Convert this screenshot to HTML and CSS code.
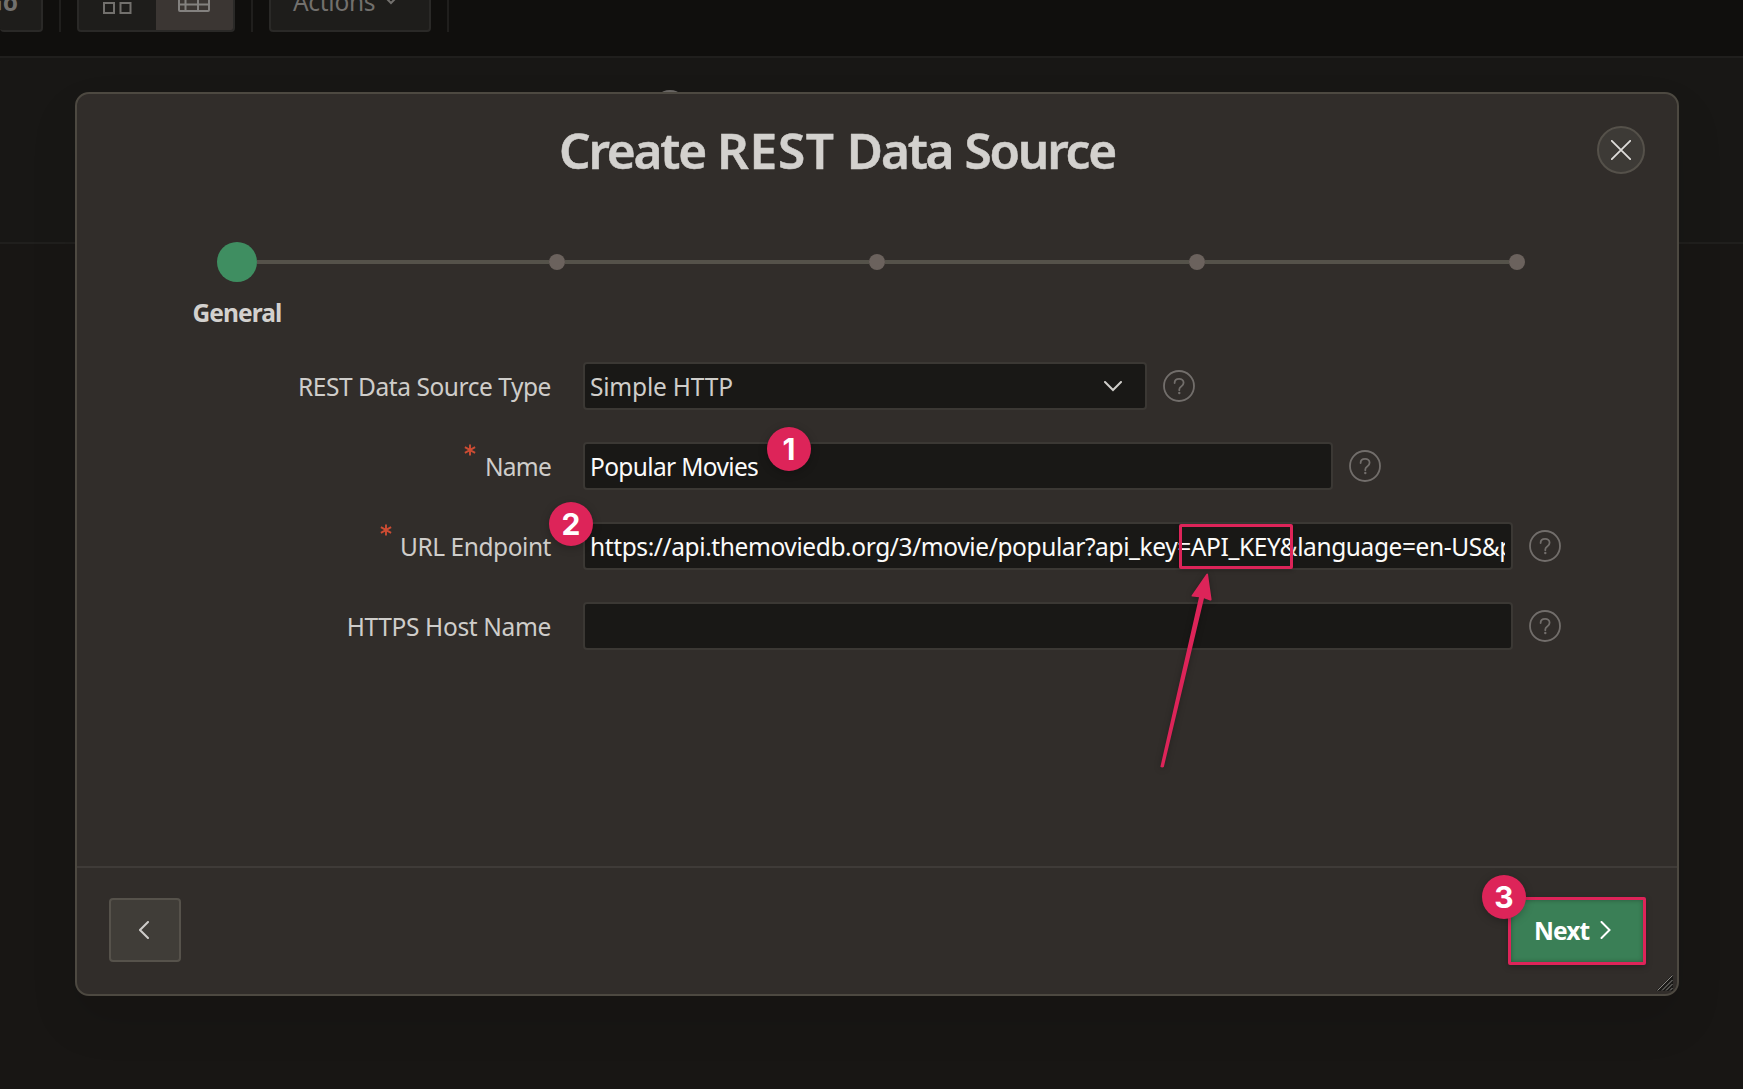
FILE: index.html
```html
<!DOCTYPE html>
<html lang="en">
<head>
<meta charset="utf-8">
<title>Create REST Data Source</title>
<link rel="stylesheet" href="styles.css">
</head>
<body>
<header class="toolbar">
  <div class="tool go">Go</div>
  <i class="sep"></i>
  <div class="tool views">
    <span class="view">
      <svg width="29" height="34" viewBox="0 0 29 34" fill="none" stroke="currentColor" stroke-width="2"><path d="M1 1h10v10H1zM17.500 1h10v10h-10zM1 23h10v10H1zM17.500 23h10v10h-10z"/></svg>
    </span>
    <span class="view active">
      <svg width="32" height="30" viewBox="0 0 32 30" fill="none" stroke="currentColor" stroke-width="2"><rect x="1" y="1" width="30" height="28" rx="1"/><path d="M1 22.500h30M1 15.500h30M7.500 8v21M20 8v21M1 8h30"/></svg>
    </span>
  </div>
  <i class="sep"></i>
  <div class="tool actions">Actions
    <svg width="14" height="9" viewBox="0 0 14 9" fill="none" stroke="currentColor" stroke-width="2"><path d="M1 1l6 6 6-6"/></svg>
  </div>
  <i class="sep"></i>
</header>
<section class="search-region"><i class="peek"></i></section>

<main class="dialog">
  <div class="dialog-head">
    <h1>Create <span class="caps">REST</span> Data Source</h1>
    <button class="close" aria-label="Close">
      <svg width="20" height="20" viewBox="0 0 20 20" fill="none" stroke="currentColor" stroke-width="1.800" stroke-linecap="round"><path d="M.8.8l18.400 18.400M19.200.8L.8 19.200"/></svg>
    </button>
  </div>
  <div class="steps">
    <i class="dot current"></i><i class="line"></i><i class="dot"></i><i class="line"></i><i class="dot"></i><i class="line"></i><i class="dot"></i><i class="line"></i><i class="dot"></i>
  </div>
  <div class="step-name">General</div>
  <form class="fields">
    <div class="row">
      <label class="l-type">REST Data Source Type</label>
      <div class="field select"><span class="value v-type">Simple HTTP</span>
        <svg width="18" height="11" viewBox="0 0 18 11" fill="none" stroke="currentColor" stroke-width="2" stroke-linecap="round"><path d="M1 1l8 8 8-8"/></svg>
      </div>
      <svg class="help" viewBox="0 0 32 32"><use href="#help"/></svg>
    </div>
    <div class="row">
      <label class="l-name"><svg class="req" viewBox="0 0 12 12"><use href="#star"/></svg>Name</label>
      <div class="field medium"><span class="value v-name">Popular Movies</span></div>
      <svg class="help" viewBox="0 0 32 32"><use href="#help"/></svg>
    </div>
    <div class="row">
      <label class="l-url"><svg class="req" viewBox="0 0 12 12"><use href="#star"/></svg>URL Endpoint</label>
      <div class="field wide"><span class="value v-url">https://api.themoviedb.org/3/movie/popular?api_key=API_KEY&amp;language=en-US&amp;page=1</span></div>
      <svg class="help" viewBox="0 0 32 32"><use href="#help"/></svg>
    </div>
    <div class="row">
      <label class="l-host">HTTPS Host Name</label>
      <div class="field wide"></div>
      <svg class="help" viewBox="0 0 32 32"><use href="#help"/></svg>
    </div>
  </form>
  <footer class="dialog-foot">
    <button class="prev" aria-label="Previous">
      <svg width="10" height="18" viewBox="0 0 10 18" fill="none" stroke="currentColor" stroke-width="2" stroke-linecap="round"><path d="M9 1L1 9l8 8"/></svg>
    </button>
    <button class="next">Next
      <svg width="11" height="18" viewBox="0 0 11 18" fill="none" stroke="currentColor" stroke-width="2" stroke-linecap="round"><path d="M1.500 1L9.500 9l-8 8"/></svg>
    </button>
  </footer>
  <svg class="grip" viewBox="0 0 17 17"><path d="M0 17L17 0v17z" fill="#1b1a18"/><path d="M1.500 16.500L16.500 1.500M6 16.500L16.500 6M10 16.500l6.500-6.500M14 16.500l2.500-2.500" stroke="#8a8783" stroke-width="1"/></svg>
</main>

<i class="mark"></i>
<svg class="arrow" viewBox="0 0 70 210"><path d="M10.400 202.700L49 33.200L42.200 32.600Q41.200 32.300 41.600 31.400L56.400 10Q57.400 9 58 10.200L61.600 35.600Q61.500 37 60 36.400L54 34.300L13.800 203Q12 204 10.400 202.700Z" fill="#dd2459"/></svg>
<b class="badge b1">1</b>
<b class="badge b2">2</b>
<b class="badge b3">3</b>

<svg width="0" height="0" class="defs">
  <symbol id="help" viewBox="0 0 32 32"><circle cx="16" cy="16" r="15" fill="none" stroke="currentColor" stroke-width="1.800"/><path d="M11.600 13c0-2.600 1.900-4.200 4.500-4.200s4.500 1.700 4.500 4c0 1.900-1.200 2.900-2.400 3.800-1.300.9-1.900 1.600-1.900 3v.6" fill="none" stroke="currentColor" stroke-width="1.800" stroke-linecap="round"/><circle cx="16.300" cy="23" r="1.200" fill="currentColor"/></symbol>
  <symbol id="star" viewBox="0 0 12 12"><path d="M6 .5v11M.9 3.100l10.200 5.800M11.100 3.100L.9 8.900" fill="none" stroke="currentColor" stroke-width="1.900"/></symbol>
</svg>
</body>
</html>
```
FILE: styles.css
```css
* { box-sizing: border-box; }
html, body { height: 100%; }
body {
  margin: 0;
  overflow: hidden;
  background: #181614;
  font: 400 24.5px/34px "Noto Sans", "Open Sans", sans-serif;
  color: #cfcdca;
}
svg { display: block; flex: none; }
button { font: inherit; color: inherit; padding: 0; }
.defs { position: absolute; }

/* page behind the dialog */
.toolbar {
  height: 58px;
  display: flex;
  align-items: flex-start;
  background: #100f0d;
  border-bottom: 2px solid #201f1d;
  color: #72706d;
}
.tool {
  height: 64px;
  margin-top: -32px;
  display: flex;
  align-items: center;
  background: #1e1d1b;
  border: 2px solid #2a2927;
  border-radius: 4px;
}
.go { width: 43px; justify-content: flex-end; padding: 4px 23px 0 0; font-weight: 700; border-left: 0; }
.sep { width: 2px; height: 32px; background: #201f1d; margin: 0 16px; }
.views { width: 158px; align-items: stretch; overflow: hidden; }
.view { flex: 1; display: flex; align-items: center; justify-content: center; padding: 0 1px 6px 0; }
.active { background: #3b3633; color: #83817f; }
.actions { width: 162px; padding: 3px 0 0 22px; gap: 9px; letter-spacing: -.3px; }
.actions svg { margin-bottom: 3px; }
.search-region { height: 186px; background: #181715; border-bottom: 2px solid #201f1d; position: relative; }
.peek { position: absolute; left: 653px; top: 32px; width: 34px; height: 34px; border: 2px solid #6b6865; border-radius: 50%; }

/* dialog */
.dialog {
  position: absolute;
  left: 75px;
  top: 92px;
  width: 1604px;
  height: 904px;
  display: flex;
  flex-direction: column;
  background: #312d2a;
  border: 2px solid #4d4941;
  border-radius: 14px;
  box-shadow: 0 24px 48px rgba(0, 0, 0, .1);
}
.dialog-head { display: flex; align-items: center; height: 112px; padding-right: 32px; }
h1 { flex: 1; margin: 0; text-align: center; font-size: 49.5px; line-height: 60px; font-weight: 600; letter-spacing: -2.2px; word-spacing: 1.500px; color: #d3d1ce; -webkit-text-stroke: .5px #d3d1ce; }
.caps { letter-spacing: .7px; }
.close {
  width: 48px; height: 48px; border-radius: 50%;
  display: flex; align-items: center; justify-content: center;
  background: #3d3a36; border: 2px solid #55514a; color: #dedcda;
}
.steps { display: flex; align-items: center; height: 40px; margin: 36px 152px 0 140px; }
.dot { width: 16px; height: 16px; border-radius: 50%; background: #6b625d; }
.current { width: 40px; height: 40px; background: #3f8e61; }
.line { flex: 1; height: 4px; background: #55524a; }
.current + .line { flex: 0 0 292px; }
.step-name { width: 320px; text-align: center; margin-top: 14px; font-weight: 700; letter-spacing: -.9px; color: #d3d1ce; }
.fields { margin-top: 32px; display: flex; flex-direction: column; gap: 32px; }
.row { display: flex; align-items: center; height: 48px; }
label { width: 474px; padding-top: 2px; margin-right: 32px; display: flex; justify-content: flex-end; white-space: nowrap; }
.l-type { letter-spacing: -.45px; }
.l-name { letter-spacing: -.75px; }
.l-url { letter-spacing: -.45px; }
.l-host { letter-spacing: -.35px; }
/* required marker sits above the label's first letter */
.req { width: 12px; height: 12px; margin: -6px 8.500px 0 0; color: #cd4c33; }
.field {
  height: 48px; display: flex; align-items: center; padding: 0 6px;
  background: #191816; border: 2px solid #3b3834; border-radius: 4px;
}
.select { width: 564px; justify-content: space-between; padding-right: 23px; }
.medium { width: 750px; color: #fcfbfa; }
.wide { width: 930px; color: #fcfbfa; }
.value { white-space: nowrap; overflow: hidden; margin-left: -1px; padding-top: 2px; }
.v-type { letter-spacing: -.2px; }
.v-name { letter-spacing: -.65px; }
.v-url { letter-spacing: -.4px; }
.help { width: 32px; height: 32px; margin-left: 15.500px; color: #726e6b; }
.dialog-foot {
  margin-top: auto; height: 128px; padding: 0 31px 0 32px;
  display: flex; align-items: center; justify-content: space-between;
  border-top: 2px solid #3f3b38;
}
.prev, .next { display: flex; align-items: center; }
.prev { width: 72px; height: 64px; margin-bottom: 2px; justify-content: center; background: #403d38; border: 2px solid #56524b; border-radius: 4px; padding-right: 2px; }
.next {
  width: 138px; height: 68px; padding-left: 23px; gap: 11px;
  background: #3a7f56; border: 3px solid #dd2459; border-radius: 2px;
  box-shadow: 0 2px 6px rgba(0, 0, 0, .25), inset 0 0 5px rgba(0, 0, 0, .3);
  color: #fff; font-weight: 700; letter-spacing: -.9px;
}
.next svg { margin-bottom: 2px; }
.grip { position: absolute; right: 4px; bottom: 3px; width: 17px; height: 17px; }

/* callouts */
.badge {
  position: absolute; width: 44px; height: 44px; border-radius: 50%;
  background: #dd2459; color: #fff; text-align: center;
  font: 700 30px/44px Inter, "Liberation Sans", sans-serif;
  box-shadow: 0 2px 8px rgba(0, 0, 0, .25);
}
.b1 { left: 767px; top: 427px; }
.b2 { left: 549px; top: 502px; }
.b3 { left: 1482px; top: 875px; }
.mark { position: absolute; left: 1179px; top: 524px; width: 114px; height: 45px; border: 3px solid #dd2459; border-radius: 2px; box-shadow: 0 1px 4px rgba(0, 0, 0, .3); }
.arrow { position: absolute; left: 1150px; top: 564px; width: 70px; height: 210px; filter: drop-shadow(0 1px 3px rgba(0, 0, 0, .3)); }
```
